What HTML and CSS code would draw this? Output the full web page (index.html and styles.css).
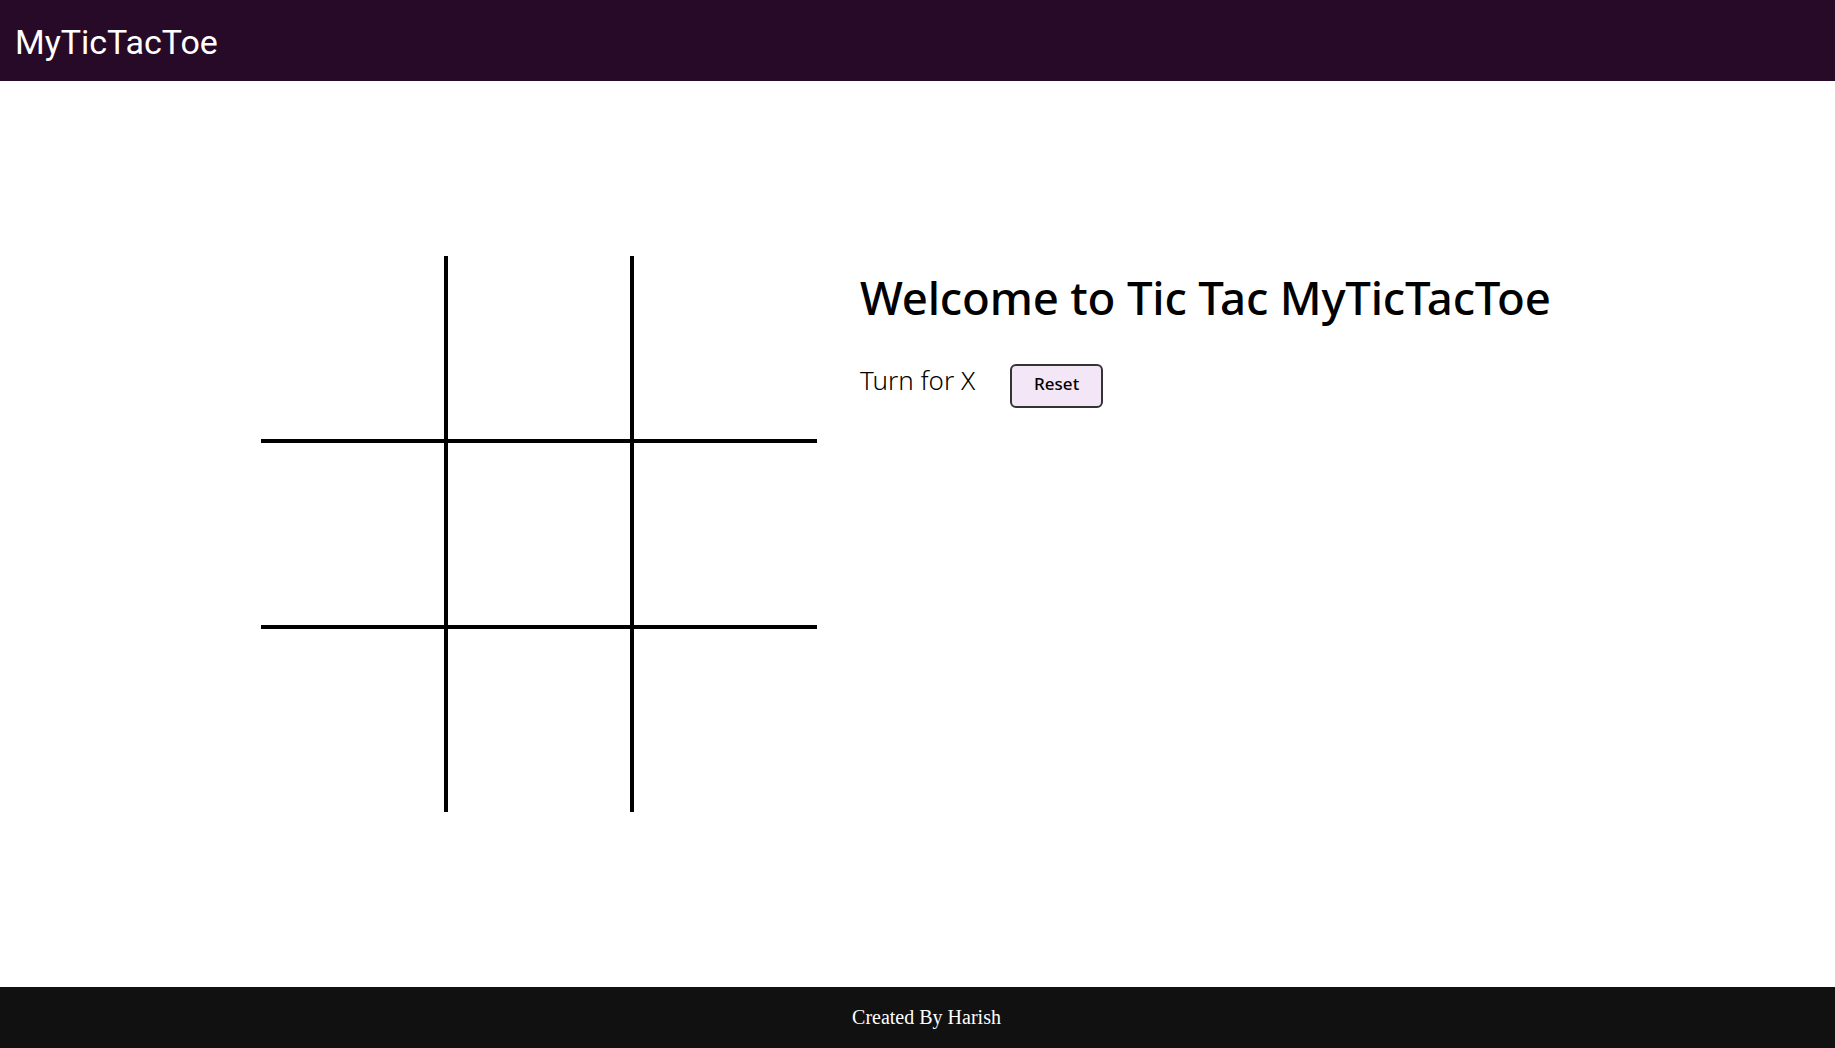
FILE: index.html
```html
<!DOCTYPE html>
<html lang="en">
<head>
<meta charset="utf-8">
<title>MyTicTacToe</title>
<link rel="stylesheet" href="styles.css">
</head>
<body>
<div class="app">
  <header class="topbar">
    <div class="brand">MyTicTacToe</div>
  </header>
  <main class="main">
    <div class="board">
      <div class="cell c1 r1"></div>
      <div class="cell c2 r1"></div>
      <div class="cell c3 r1"></div>
      <div class="cell c1 r2"></div>
      <div class="cell c2 r2"></div>
      <div class="cell c3 r2"></div>
      <div class="cell c1 r3"></div>
      <div class="cell c2 r3"></div>
      <div class="cell c3 r3"></div>
    </div>
    <section class="info">
      <h1 class="title">Welcome to Tic Tac MyTicTacToe</h1>
      <div class="status">
        <span class="turn">Turn for X</span>
        <button class="reset" type="button">Reset</button>
      </div>
    </section>
  </main>
  <footer class="footer">Created By Harish</footer>
</div>
</body>
</html>
```
FILE: styles.css
```css
* { box-sizing: border-box; }
html, body { margin: 0; padding: 0; }
body { background: #ffffff; }

.app {
  display: flex;
  flex-direction: column;
  height: 1048px;
}

.topbar {
  height: 81px;
  background: #270a27;
  display: flex;
  align-items: center;
  padding-left: 15px;
  padding-top: 2px;
  flex-shrink: 0;
}
.brand {
  font-family: Roboto, "Liberation Sans", sans-serif;
  font-size: 34px;
  color: #ffffff;
  line-height: 1;
}

.main {
  flex: 1;
  display: flex;
  justify-content: center;
  align-items: center;
  gap: 43px;
}

.board {
  width: 556px;
  height: 556px;
  display: grid;
  grid-template-columns: repeat(3, 1fr);
  grid-template-rows: repeat(3, 1fr);
}
.cell { border: 0 solid #000; }
.c1 { border-right-width: 2px; }
.c2 { border-left-width: 2px; border-right-width: 2px; }
.c3 { border-left-width: 2px; }
.r1 { border-bottom-width: 2px; }
.r2 { border-top-width: 2px; border-bottom-width: 2px; }
.r3 { border-top-width: 2px; }

.info {
  width: 714px;
  align-self: flex-start;
  margin-top: 189px;
  font-family: "Noto Sans", "Open Sans", sans-serif;
  color: #000;
}
.title {
  margin: 0;
  font-size: 45.6px;
  font-weight: 500;
  line-height: 1.2;
  letter-spacing: -0.2px;
}
.status {
  display: flex;
  align-items: baseline;
  gap: 35px;
  margin-top: 37px;
}
.turn {
  font-size: 26px;
  font-weight: 300;
}
.reset {
  width: 93px;
  height: 44px;
  border: 2px solid #333;
  border-radius: 6px;
  background: #f3e6f7;
  font-family: "Noto Sans", "Open Sans", sans-serif;
  font-size: 17px;
  font-weight: 500;
  color: #000;
  padding: 0 0 6px;
}

.footer {
  height: 61px;
  flex-shrink: 0;
  background: #111111;
  color: #ffffff;
  font-family: "Liberation Serif", "Times New Roman", serif;
  font-size: 20px;
  display: flex;
  align-items: center;
  justify-content: center;
  padding-left: 18px;
}
```
